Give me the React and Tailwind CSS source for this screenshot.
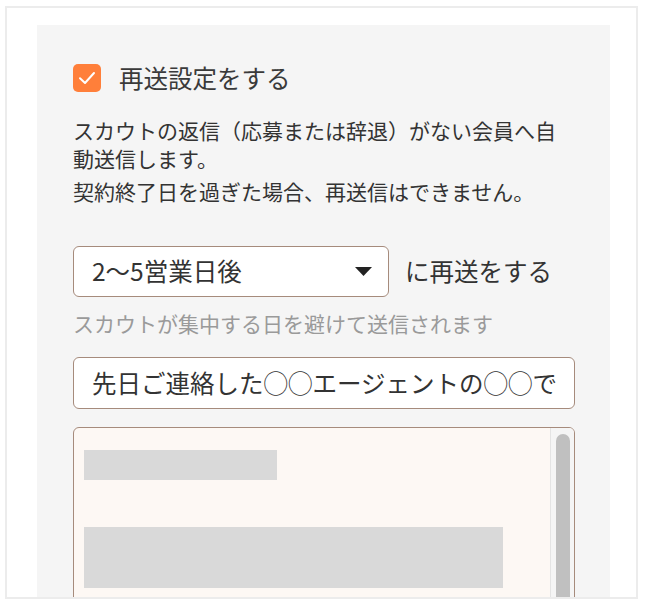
import React from "react";

const jp = { fontFamily: '"Noto Sans CJK JP", "Noto Sans", sans-serif' };

export default function App() {
  return (
    <div className="bg-white w-[646px] h-[608px] overflow-hidden" style={jp}>
      <div className="ml-[5px] mt-[6px] w-[633px] h-[593px] border-2 border-[#ececec] pl-[30px] pr-[26px] pt-[17px] overflow-hidden">
        <div className="bg-[#f5f5f5] h-[700px] pl-[36px] pr-[35px] pt-[39px] text-[#333]">
          {/* checkbox */}
          <label className="flex items-center gap-[18px]">
            <span className="w-[28px] h-[28px] rounded-[5px] bg-[#ff7f3a] flex items-center justify-center">
              <svg width="18" height="14" viewBox="0 0 18 14" fill="none">
                <path d="M2 7.2 L7 12 L16 2" stroke="white" strokeWidth="2" strokeLinecap="round" strokeLinejoin="round" />
              </svg>
            </span>
            <span className="text-[24.5px] leading-[28px] text-[#3a3a3a]">再送設定をする</span>
          </label>

          {/* description */}
          <div className="mt-[24px] text-[21px] leading-[28px]">
            <p>スカウトの返信（応募または辞退）がない会員へ自動送信します。</p>
            <p className="mt-[5px]">契約終了日を過ぎた場合、再送信はできません。</p>
          </div>

          {/* select */}
          <div className="mt-[41px] flex items-center gap-[16px]">
            <div className="w-[316px] h-[51px] rounded-[6px] border-[1.5px] border-[#a68b7c] bg-white flex items-center justify-between pl-[18px] pr-[16px]">
              <span className="text-[24.5px] leading-none">2〜5営業日後</span>
              <svg width="17" height="9" viewBox="0 0 17 9">
                <path d="M0 0 H17 L8.5 9 Z" fill="#222" />
              </svg>
            </div>
            <span className="text-[24.5px] leading-none">に再送をする</span>
          </div>
          <p className="mt-[14px] text-[21px] leading-[24px] text-[#9a9a9a]">
            スカウトが集中する日を避けて送信されます
          </p>

          {/* subject */}
          <div className="mt-[22px] h-[52px] rounded-[6px] border-[1.5px] border-[#a68b7c] bg-white flex items-center pl-[18px] overflow-hidden whitespace-nowrap">
            <span className="text-[24.5px] leading-none">先日ご連絡した◯◯エージェントの◯◯で</span>
          </div>

          {/* body */}
          <div className="mt-[18px] h-[220px] rounded-[6px] border-[1.5px] border-[#a68b7c] bg-[#fdf8f4] flex overflow-hidden">
            <div className="flex-1 pl-[10px] pt-[22px]">
              <div className="w-[193px] h-[30px] bg-[#d9d9d9]" />
              <div className="mt-[47px] w-[419px] h-[61px] bg-[#d9d9d9]" />
            </div>
            <div className="w-[24px] bg-[#f5f5f5] border-l border-[#e4e4e4] flex justify-center pt-[6px]">
              <div className="w-[14px] h-[200px] rounded-full bg-[#c0c0c0]" />
            </div>
          </div>
        </div>
      </div>
    </div>
  );
}
